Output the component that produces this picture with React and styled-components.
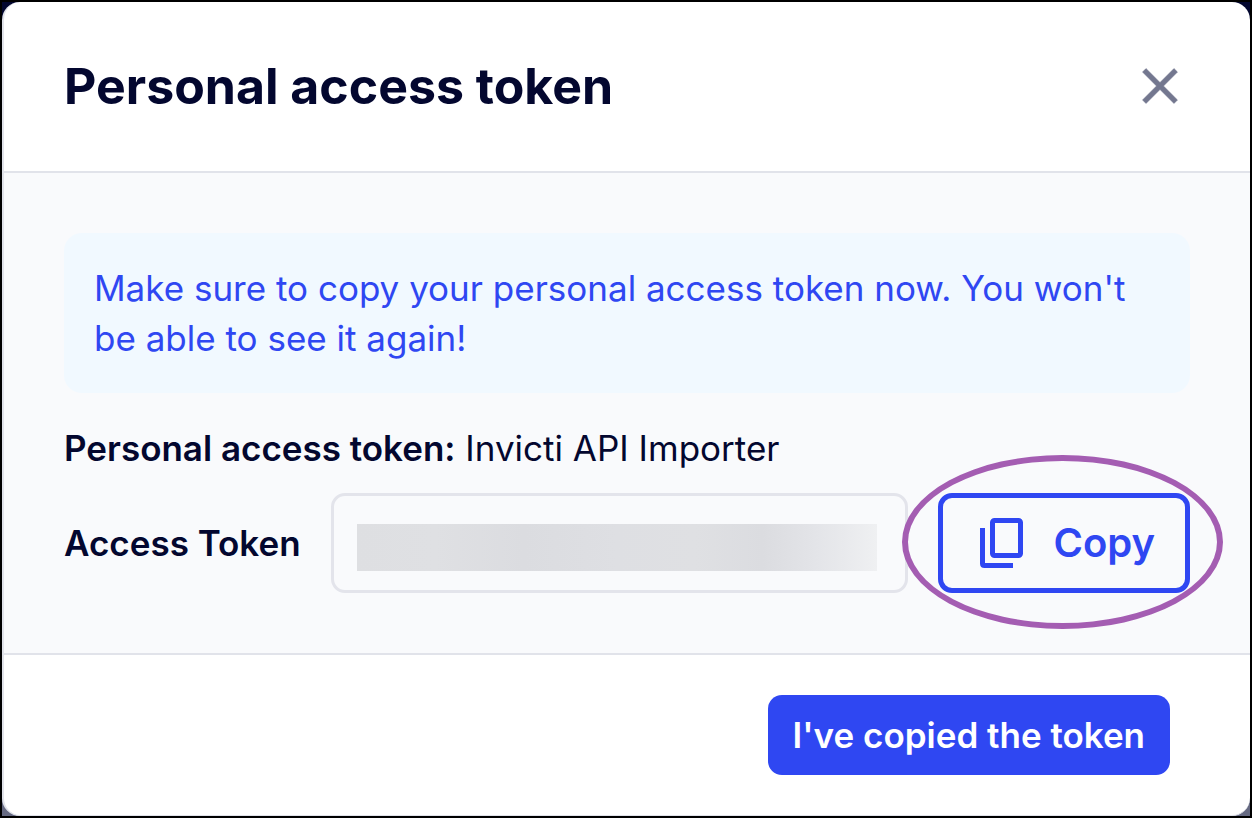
import { useState } from 'react';
import styled, { createGlobalStyle } from 'styled-components';

const App = () => {
  const [open, setOpen] = useState(true);
  const [token] = useState('');

  const handleCopy = () => {
    if (navigator.clipboard) {
      navigator.clipboard.writeText(token);
    }
  };

  return (
    <>
      <GlobalStyle />
      <Backdrop>
        {open && (
          <Dialog role="dialog" aria-labelledby="dialog-title">
            <Header>
              <Title id="dialog-title">Personal access token</Title>
              <CloseButton type="button" aria-label="Close" onClick={() => setOpen(false)}>
                <svg
                  width="60"
                  height="60"
                  viewBox="0 0 24 24"
                  fill="currentColor"
                  stroke="currentColor"
                  strokeWidth="0.2"
                  strokeLinejoin="round"
                >
                  <path d="M19 6.41L17.59 5 12 10.59 6.41 5 5 6.41 10.59 12 5 17.59 6.41 19 12 13.41 17.59 19 19 17.59 13.41 12z" />
                </svg>
              </CloseButton>
            </Header>

            <Body>
              <Notice>
                Make sure to copy your personal access token now. You won't be able to see it again!
              </Notice>
              <TokenName>
                <strong>Personal access token:</strong> Invicti API Importer
              </TokenName>
              <TokenRow>
                <Label htmlFor="access-token">Access Token</Label>
                <TokenInput id="access-token" type="text" value={token} readOnly />
                <Highlight>
                  <CopyButton type="button" onClick={handleCopy}>
                    <svg width="43" height="50" viewBox="0 0 43 50" fill="none" stroke="currentColor" strokeWidth="5">
                      <rect x="12.5" y="2.5" width="28" height="35" rx="2" />
                      <path d="M2.5 10V45.5Q2.5 47.5 4.5 47.5H33" />
                    </svg>
                    Copy
                  </CopyButton>
                </Highlight>
              </TokenRow>
            </Body>

            <Footer>
              <ConfirmButton type="button" onClick={() => setOpen(false)}>
                I've copied the token
              </ConfirmButton>
            </Footer>
          </Dialog>
        )}
      </Backdrop>
    </>
  );
};

export default App;

// ----------------------
// Styled Components
// ----------------------

const GlobalStyle = createGlobalStyle`
  * {
    box-sizing: border-box;
  }

  body {
    margin: 0;
    font-family: Inter, sans-serif;
    color: #03072f;
  }

  button,
  input {
    font-family: inherit;
  }
`;

const Backdrop = styled.div`
  min-height: 100vh;
  border: 2px solid #000000;
  background: linear-gradient(#03072f 50%, #666a82 50%);
`;

const Dialog = styled.div`
  border-left: 2px solid #e1e3ea;
  border-bottom: 1px solid #e1e3ea;
  border-radius: 18px;
  background: #ffffff;
  overflow: hidden;
`;

const Header = styled.div`
  display: flex;
  align-items: center;
  justify-content: space-between;
  padding: 54px 60px 55px;
  border-bottom: 2px solid #e1e3ea;
`;

const Title = styled.h1`
  margin: 0;
  font-size: 50px;
  line-height: 60px;
  font-weight: 700;
`;

const CloseButton = styled.button`
  display: flex;
  padding: 0;
  border: none;
  background: none;
  color: #73778f;
  cursor: pointer;
`;

const Body = styled.div`
  padding: 60px;
  background: #f9fafc;
`;

const Notice = styled.p`
  margin: 0;
  padding: 30px;
  border-radius: 18px;
  background: #f1f9ff;
  color: #2f47f2;
  font-size: 35px;
  line-height: 50px;
  font-weight: 400;
`;

const TokenName = styled.p`
  margin: 30px 0 20px;
  font-size: 35px;
  line-height: 50px;
  font-weight: 400;

  strong {
    font-weight: 600;
  }
`;

const TokenRow = styled.div`
  display: flex;
  align-items: center;
  gap: 30px;
`;

const Label = styled.label`
  font-size: 35px;
  line-height: 50px;
  font-weight: 600;
`;

const TokenInput = styled.input`
  flex: 1;
  min-width: 0;
  height: 100px;
  padding: 28px 28px 19px 23px;
  border: 3px solid #e3e4eb;
  border-radius: 14px;
  background: linear-gradient(
      90deg,
      #dedfe2 0%,
      #dfe0e3 15%,
      #dbdce0 32%,
      #dedfe3 50%,
      #dfe0e3 65%,
      #dbdce0 78%,
      #e3e4e8 88%,
      #eff0f2 100%
    )
    content-box no-repeat;
  font-size: 35px;
  outline: none;
`;

const Highlight = styled.div`
  position: relative;

  &::after {
    content: '';
    position: absolute;
    inset: -38px -33px -36px -36px;
    border: 6px solid #a45db2;
    border-radius: 50%;
    pointer-events: none;
  }
`;

const CopyButton = styled.button`
  display: flex;
  align-items: center;
  gap: 30px;
  height: 100px;
  padding: 0 30px 0 37px;
  border: 5px solid #2f47f2;
  border-radius: 14px;
  background: transparent;
  color: #2f47f2;
  font-size: 40px;
  line-height: 50px;
  font-weight: 600;
  cursor: pointer;
`;

const Footer = styled.div`
  display: flex;
  justify-content: flex-end;
  padding: 40px 80px 40px 60px;
  border-top: 2px solid #e1e3ea;
`;

const ConfirmButton = styled.button`
  height: 80px;
  padding: 0 25px;
  border: none;
  border-radius: 14px;
  background: #2f47f2;
  color: #ffffff;
  font-size: 35px;
  line-height: 50px;
  font-weight: 600;
  cursor: pointer;
`;
